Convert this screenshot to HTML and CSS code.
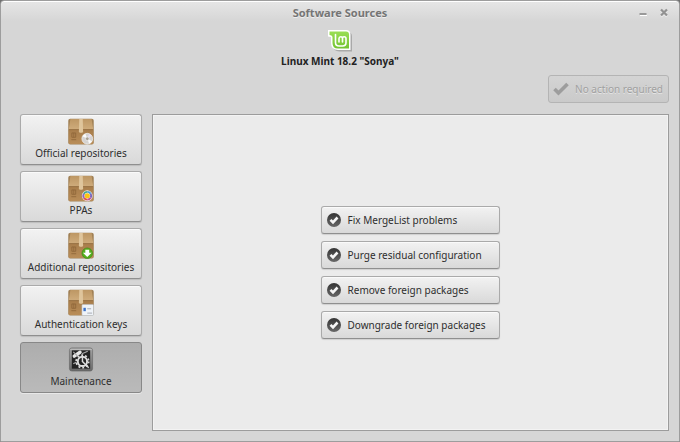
FILE: index.html
```html
<!DOCTYPE html>
<html lang="en">
<head>
    <meta charset="UTF-8">
    <meta name="viewport" content="width=device-width, initial-scale=1.0">
    <title>Software Sources</title>
    <link rel="stylesheet" href="styles.css">
</head>
<body>

<!-- Shared icon shapes -->
<svg class="defs" width="0" height="0" aria-hidden="true">
    <defs>
        <linearGradient id="box-top" x1="0" y1="0" x2="0" y2="1">
            <stop offset="0" stop-color="#bd9764"/>
            <stop offset="1" stop-color="#cfac7c"/>
        </linearGradient>
        <linearGradient id="box-front" x1="0" y1="0" x2="0" y2="1">
            <stop offset="0" stop-color="#a87d4b"/>
            <stop offset="1" stop-color="#b98d58"/>
        </linearGradient>
        <linearGradient id="check-fill" x1="0" y1="0" x2="0" y2="1">
            <stop offset="0" stop-color="#343434"/>
            <stop offset="1" stop-color="#686868"/>
        </linearGradient>
        <linearGradient id="mint-fill" x1="0" y1="0" x2="0" y2="1">
            <stop offset="0" stop-color="#9ade55"/>
            <stop offset="1" stop-color="#74c332"/>
        </linearGradient>
        <linearGradient id="frame-fill" x1="0" y1="0" x2="0" y2="1">
            <stop offset="0" stop-color="#a4a4a4"/>
            <stop offset="1" stop-color="#686868"/>
        </linearGradient>
        <symbol id="package" viewBox="0 0 28 28">
            <rect x="0.800" y="0.800" width="26.400" height="26.700" rx="2" fill="#a08055"/>
            <path d="M3 1h22l1.700 11h-25.400z" fill="url(#box-top)"/>
            <rect x="1.300" y="12" width="25.400" height="15" rx="1" fill="url(#box-front)"/>
            <path d="M1.300 12h25.400" stroke="#8f6a3d" stroke-width="0.700"/>
            <path d="M12.200 1h3.600l.4 13.500c0 1-4.400 1-4.400 0z" fill="#dfc59c"/>
            <path d="M4.500 15.500h4v4.500h-4zM6.500 15.500v4.500M4 22.500h5" fill="none" stroke="#8d6438" stroke-width="0.800"/>
        </symbol>
        <symbol id="check-round" viewBox="0 0 14 14">
            <circle cx="7" cy="7" r="7" fill="url(#check-fill)"/>
            <path d="M3.500 6.800l2.500 2.500 4.500-4.800" fill="none" stroke="#f6f6f6" stroke-width="2.600"/>
        </symbol>
    </defs>
</svg>

<div class="window">
    <header class="titlebar">
        <h1 class="title">Software Sources</h1>
        <div class="window-controls">
            <button class="control" type="button" aria-label="Minimize">
                <svg width="8" height="10" viewBox="0 0 8 10"><path d="M1 7.500h7" stroke="#fff" stroke-width="1"/><path d="M.5 6h7" stroke="#999" stroke-width="2"/></svg>
            </button>
            <button class="control" type="button" aria-label="Close">
                <svg width="8" height="10" viewBox="0 0 8 10"><path d="M1 2.500l6 6M7 2.500l-6 6" stroke="#f0f0f0" stroke-width="2.200"/><path d="M1 1.500l6 6M7 1.500l-6 6" stroke="#929292" stroke-width="2.200"/></svg>
            </button>
        </div>
    </header>

    <div class="release">
        <svg class="logo" width="28" height="24" viewBox="0 0 28 24">
            <path d="M4 3h17.500q4.500 0 4.500 4.500v15H13.500Q7 22.500 7 16V10.500Q7 8.500 4 8.500z" fill="#858585" opacity=".55"/>
            <path d="M2 1h18q4.500 0 4.500 4.500V21H12Q5 21 5 14V9.500Q5 7.500 2 7.500z" fill="#fff"/>
            <path d="M3.500 2.500H20q3 0 3 3v14H12Q6.500 19.500 6.500 14V8.500Q6.500 6 3.500 6z" fill="url(#mint-fill)"/>
            <path d="M9.500 5.500v8q0 3.500 3.500 3.500h3.500q3.500 0 3.500-3.500V9.500q0-1.800-1.800-1.800T16.500 9.500v3.500M16.500 9.500q0-1.800-1.700-1.800T13 9.500v3.500" fill="none" stroke="#fff" stroke-width="1.600" stroke-linecap="round"/>
        </svg>
        <h2 class="release-name">Linux Mint 18.2 "Sonya"</h2>
    </div>

    <div class="toolbar">
        <button class="button update-button" type="button" disabled>
            <svg width="16" height="14" viewBox="0 0 16 14"><path d="M1.500 7l4 4 9-9" fill="none" stroke="#9d9d9d" stroke-width="3.600"/></svg>
            No action required
        </button>
    </div>

    <main class="content">
        <nav class="sidebar">
            <button class="button category" type="button">
                <svg width="28" height="28" viewBox="0 0 28 28">
                    <use href="#package"/>
                    <circle cx="20.500" cy="21.500" r="5.600" fill="#d5d3d1" stroke="#f5f5f5" stroke-width="0.700"/>
                    <path d="M20.500 21.500l-5-2.500a5.500 5.500 0 0 1 3-2.700zM20.500 21.500l5 2.500a5.500 5.500 0 0 1-3 2.700z" fill="#fafafa"/>
                    <path d="M20.500 21.500l2-5a5.500 5.500 0 0 1 2.500 2z" fill="#e5ddef"/>
                    <circle cx="20.500" cy="21.500" r="1.900" fill="#aaa091" stroke="#eee" stroke-width="0.700"/>
                </svg>
                Official repositories
            </button>
            <button class="button category" type="button">
                <svg width="28" height="28" viewBox="0 0 28 28">
                    <use href="#package"/>
                    <circle cx="20.500" cy="21.500" r="5.600" fill="#f0eef2"/>
                    <g fill="none" stroke-width="2">
                        <path d="M20.500 17.500a4 4 0 0 1 3.500 2" stroke="#4b9bd5"/>
                        <path d="M24 19.500a4 4 0 0 1 0 4" stroke="#7d66bb"/>
                        <path d="M24 23.500a4 4 0 0 1-3.500 2" stroke="#c35296"/>
                        <path d="M20.500 25.500a4 4 0 0 1-3.500-2" stroke="#df554b"/>
                        <path d="M17 23.500a4 4 0 0 1 0-4" stroke="#8b65c5"/>
                        <path d="M17 19.500a4 4 0 0 1 3.500-2" stroke="#49a98a"/>
                    </g>
                    <circle cx="20.500" cy="21.500" r="2.700" fill="#fbc514"/>
                </svg>
                PPAs
            </button>
            <button class="button category" type="button">
                <svg width="28" height="28" viewBox="0 0 28 28">
                    <use href="#package"/>
                    <circle cx="20.500" cy="22" r="5.500" fill="#55ae1e" stroke="#368912" stroke-width="0.600"/>
                    <path d="M18.500 18.500h4v3H25l-4.500 4.500-4.500-4.500h2.500z" fill="#fff"/>
                </svg>
                Additional repositories
            </button>
            <button class="button category" type="button">
                <svg width="28" height="28" viewBox="0 0 28 28">
                    <use href="#package"/>
                    <rect x="15" y="16" width="12" height="11.500" rx="1" fill="#eff3f8" stroke="#b8bec6" stroke-width="0.600"/>
                    <rect x="16.500" y="19.500" width="2.500" height="3.500" fill="#3b72c9"/>
                    <path d="M20.500 20.500h4M20.500 25h5" stroke="#a4a9b1" stroke-width="1"/>
                </svg>
                Authentication keys
            </button>
            <button class="button category selected" type="button" aria-current="page">
                <svg width="28" height="28" viewBox="0 0 28 28">
                    <rect x="2" y="2" width="24" height="24" rx="2.500" fill="url(#frame-fill)" stroke="#606060" stroke-width="0.600"/>
                    <path d="M2.800 3.500h22.400" stroke="#bebebe" stroke-width="1"/>
                    <rect x="4.500" y="4.500" width="19" height="19" fill="#242424"/>
                    <circle cx="15.500" cy="16" r="4.800" fill="none" stroke="#dedede" stroke-width="2"/>
                    <circle cx="15.500" cy="16" r="6.500" fill="none" stroke="#dedede" stroke-width="1.800" stroke-dasharray="2 2.080"/>
                    <path d="M15 15.500l7 7M15.500 11.500v4" stroke="#dedede" stroke-width="1.500"/>
                    <path d="M7 10.500l6-4" stroke="#e6e6e6" stroke-width="3.500" stroke-linecap="round"/>
                    <path d="M6 6l4 4M15 8l6-2.500M6 18.500l3.500-2" stroke="#a8a8a8" stroke-width="1.200"/>
                </svg>
                Maintenance
            </button>
        </nav>

        <section class="panel" aria-label="Maintenance">
            <div class="actions">
                <button class="button action" type="button">
                    <svg width="14" height="14"><use href="#check-round"/></svg>
                    Fix MergeList problems
                </button>
                <button class="button action" type="button">
                    <svg width="14" height="14"><use href="#check-round"/></svg>
                    Purge residual configuration
                </button>
                <button class="button action" type="button">
                    <svg width="14" height="14"><use href="#check-round"/></svg>
                    Remove foreign packages
                </button>
                <button class="button action" type="button">
                    <svg width="14" height="14"><use href="#check-round"/></svg>
                    Downgrade foreign packages
                </button>
            </div>
        </section>
    </main>
</div>

</body>
</html>
```
FILE: styles.css
```css
* {
    box-sizing: border-box;
}

body {
    margin: 0;
    background-color: #6f6f6f;
    font-family: "Noto Sans", sans-serif;
    font-size: 10px;
    line-height: 16px;
    color: #2e2e2e;
}

.defs {
    position: absolute;
}

.window {
    display: flex;
    flex-direction: column;
    min-height: 100vh;
    background: linear-gradient(#e6e6e6, #d6d6d6 20px);
    border: 1px solid #9d9d9d;
    border-radius: 4px 4px 0 0;
    box-shadow: inset 0 1px 0 #fff; /* Light edge under the frame */
}

/* Title bar */
.titlebar {
    display: grid;
    grid-template-columns: 1fr auto 1fr;
    align-items: center;
    height: 24px;
    padding: 0 11px;
}

.title {
    grid-column: 2;
    margin: 0;
    font-size: 11px;
    font-weight: bold;
    color: #757575;
    text-shadow: 0 1px 0 #eee;
}

.window-controls {
    display: flex;
    justify-content: flex-end;
    gap: 13px;
}

.control {
    display: flex;
    padding: 0;
    border: none;
    background: none;
}

/* Release logo and name */
.release {
    display: flex;
    flex-direction: column;
    align-items: center;
    padding-top: 4px;
}

.release-name {
    margin: 0;
    font-size: 10px;
    font-weight: bold;
    color: #222;
}

.toolbar {
    display: flex;
    justify-content: flex-end;
    padding: 6px 10px 11px;
}

/* Buttons */
.button {
    display: flex;
    align-items: center;
    border: 1px solid #aaa;
    border-bottom-color: #8f8f8f;
    border-radius: 3px;
    background: linear-gradient(#f2f2f2, #d9d9d9);
    box-shadow: inset 0 1px 0 #fafafa, 0 1px 1px rgba(0,0,0,0.12);
    font: inherit;
    color: inherit;
    white-space: nowrap;
}

.button:disabled {
    border-color: #b4b4b4;
    background: linear-gradient(#d4d4d4, #cacaca);
    box-shadow: none;
    color: #a0a0a0;
    text-shadow: 0 1px 0 #e6e6e6;
}

.update-button {
    gap: 6px;
    height: 28px;
    padding: 0 5px 0 4px;
}

.content {
    display: flex;
    flex: 1;
    gap: 10px;
    padding: 0 10px 10px 19px;
}

.sidebar {
    display: flex;
    flex-direction: column;
    gap: 6px;
    width: 122px;
}

.category {
    flex-direction: column;
    height: 51px;
    padding: 3px 0;
}

.category.selected {
    border-color: #888;
    background: linear-gradient(#adadad, #bababa);
    box-shadow: 0 1px 0 #e8e8e8;
}

.panel {
    display: flex;
    flex: 1;
    align-items: center;
    justify-content: center;
    border: 1px solid #9c9c9c;
    background-color: #ebebeb;
    box-shadow: inset 0 0 0 1px #f3f3f3;
}

.actions {
    display: flex;
    flex-direction: column;
    gap: 7px;
}

.action {
    gap: 7px;
    height: 28px;
    padding: 0 14px 0 5px;
}
```
